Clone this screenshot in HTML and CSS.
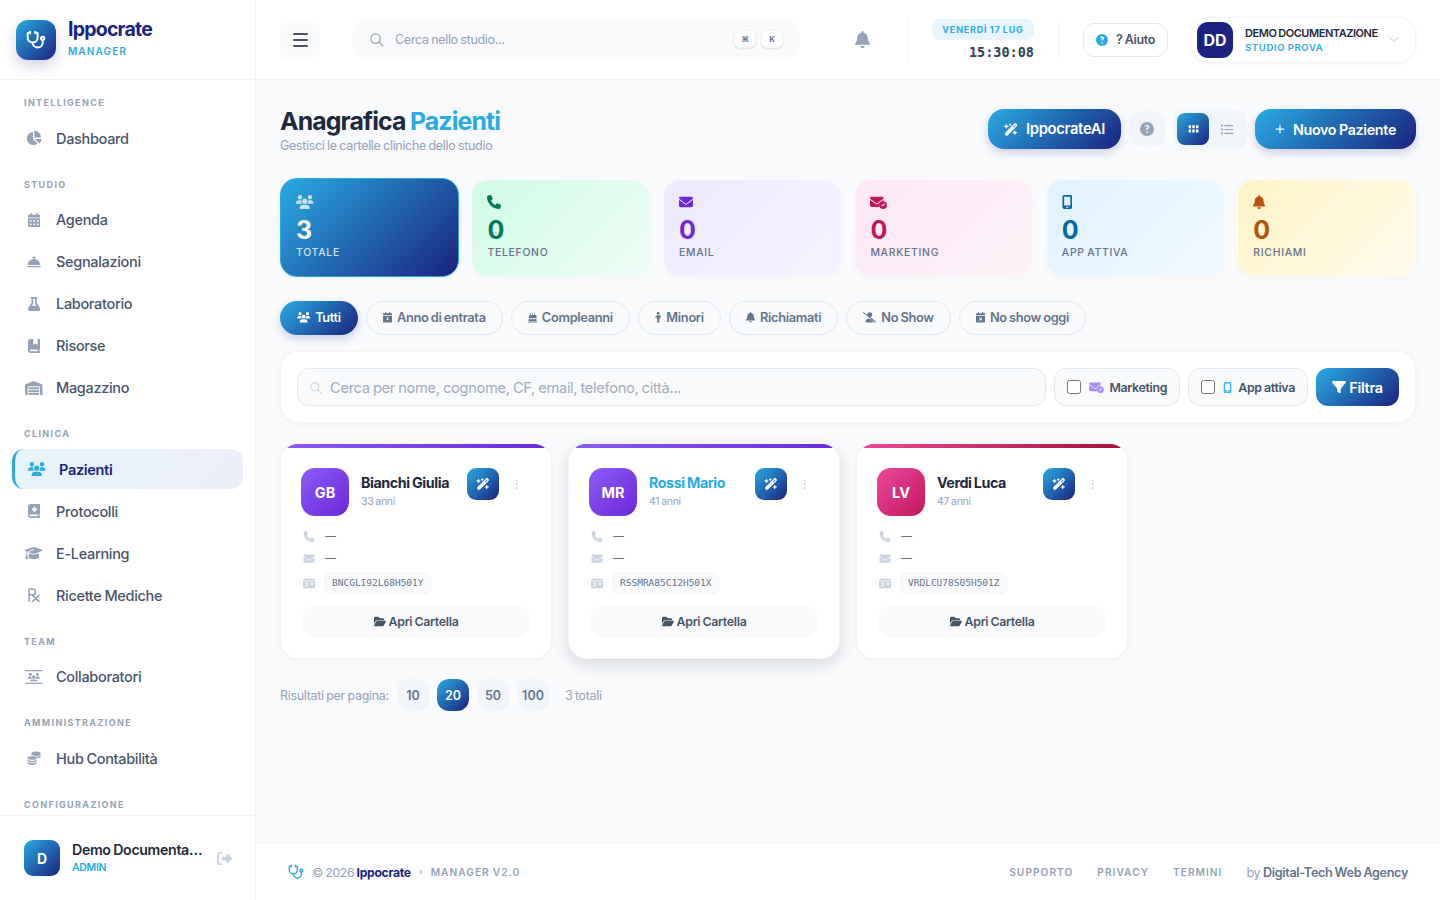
FILE: index.html
```html
<!DOCTYPE html>
<html lang="it">
<head>
    <meta charset="UTF-8">
    <meta name="viewport" content="width=device-width, initial-scale=1.0">
    <title>Anagrafica Pazienti - Ippocrate Manager</title>
    <link rel="stylesheet" href="styles.css">
</head>
<body>
    <!-- icon set, reused with <use> -->
    <svg class="sprite" aria-hidden="true">
        <defs>
            <g id="i-pie"><path d="M304 240V16.6c0-9 7-16.6 16-16.6C443.7 0 544 100.3 544 224c0 9-7.6 16-16.6 16H304zM32 272C32 150.7 122.1 50.3 239 34.3c9.2-1.3 17 6.1 17 15.4V288L412.5 444.5c6.7 6.7 6.2 17.7-1.5 23.1C371.8 495.6 323.8 512 272 512C139.5 512 32 404.6 32 272zm526.4 16c9.3 0 16.6 7.8 15.4 17c-7.7 55.9-34.6 105.6-73.9 142.3c-6 5.6-15.4 5.2-21.2-.7L320 288H558.4z"/></g>
            <g id="i-calendar"><path d="M128 0c17.7 0 32 14.3 32 32V64H288V32c0-17.7 14.3-32 32-32s32 14.3 32 32V64h48c26.5 0 48 21.5 48 48v48H0V112C0 85.5 21.5 64 48 64H96V32c0-17.7 14.3-32 32-32zM0 192H448V464c0 26.5-21.5 48-48 48H48c-26.5 0-48-21.5-48-48V192zm64 80v32c0 8.8 7.2 16 16 16h32c8.8 0 16-7.2 16-16V272c0-8.8-7.2-16-16-16H80c-8.8 0-16 7.2-16 16zm128 0v32c0 8.8 7.2 16 16 16h32c8.8 0 16-7.2 16-16V272c0-8.8-7.2-16-16-16H208c-8.8 0-16 7.2-16 16zm144-16c-8.8 0-16 7.2-16 16v32c0 8.8 7.2 16 16 16h32c8.8 0 16-7.2 16-16V272c0-8.8-7.2-16-16-16H336zM64 400v32c0 8.8 7.2 16 16 16h32c8.8 0 16-7.2 16-16V400c0-8.8-7.2-16-16-16H80c-8.8 0-16 7.2-16 16zm144-16c-8.8 0-16 7.2-16 16v32c0 8.8 7.2 16 16 16h32c8.8 0 16-7.2 16-16V400c0-8.8-7.2-16-16-16H208zm112 16v32c0 8.8 7.2 16 16 16h32c8.8 0 16-7.2 16-16V400c0-8.8-7.2-16-16-16H336c-8.8 0-16 7.2-16 16z"/></g>
            <g id="i-concierge"><path d="M216 64c-13.3 0-24 10.7-24 24s10.7 24 24 24h16v33.3C119.6 157.2 32 252.4 32 368H480c0-115.6-87.6-210.8-200-222.7V112h16c13.3 0 24-10.7 24-24s-10.7-24-24-24H256 216zM24 400c-13.3 0-24 10.7-24 24s10.7 24 24 24H488c13.3 0 24-10.7 24-24s-10.7-24-24-24H24z"/></g>
            <g id="i-flask"><path d="M288 0H160 128C110.3 0 96 14.3 96 32s14.3 32 32 32V196.8c0 11.8-3.3 23.5-9.5 33.5L10.3 406.2C3.6 417.2 0 429.7 0 442.6C0 480.9 31.1 512 69.4 512H378.6c38.3 0 69.4-31.1 69.4-69.4c0-12.8-3.6-25.4-10.3-36.4L329.5 230.4c-6.2-10.1-9.5-21.7-9.5-33.5V64c17.7 0 32-14.3 32-32s-14.3-32-32-32H288zM192 196.8V64h64V196.8c0 23.7 6.6 46.9 19 67.1L309.5 320H138.5L173 263.9c12.4-20.2 19-43.4 19-67.1z"/></g>
            <g id="i-bookmark"><path d="M0 96C0 43 43 0 96 0h96V190.7c0 13.4 15.5 20.9 26 12.5L272 160l54 43.2c10.5 8.4 26 .9 26-12.5V0h32 32c17.7 0 32 14.3 32 32V352c0 17.7-14.3 32-32 32v64c17.7 0 32 14.3 32 32s-14.3 32-32 32H384 96c-53 0-96-43-96-96V96zM64 416c0 17.7 14.3 32 32 32H352V384H96c-17.7 0-32 14.3-32 32z"/></g>
            <g id="i-warehouse"><path d="M0 488V171.3c0-26.2 15.9-49.7 40.2-59.4L308.1 4.8c7.6-3.1 16.1-3.1 23.8 0L599.8 111.9c24.3 9.7 40.2 33.3 40.2 59.4V488c0 13.3-10.7 24-24 24H568c-13.3 0-24-10.7-24-24V224c0-17.7-14.3-32-32-32H128c-17.7 0-32 14.3-32 32V488c0 13.3-10.7 24-24 24H24c-13.3 0-24-10.7-24-24zm488 24H152c-13.3 0-24-10.7-24-24V432H512v56c0 13.3-10.7 24-24 24zM128 400V336H512v64H128zm0-96V224H512v80H128z"/></g>
            <g id="i-users"><path d="M144 0a80 80 0 1 1 0 160A80 80 0 1 1 144 0zM512 0a80 80 0 1 1 0 160A80 80 0 1 1 512 0zM0 298.7C0 239.8 47.8 192 106.7 192h42.7c15.9 0 31 3.5 44.6 9.7c-1.3 7.2-1.9 14.7-1.9 22.3c0 38.2 16.8 72.5 43.3 96c-.2 0-.4 0-.7 0H21.3C9.6 320 0 310.4 0 298.7zM405.3 320c-.2 0-.4 0-.7 0c26.6-23.5 43.3-57.8 43.3-96c0-7.6-.7-15-1.9-22.3c13.6-6.3 28.7-9.7 44.6-9.7h42.7C592.2 192 640 239.8 640 298.7c0 11.8-9.6 21.3-21.3 21.3H405.3zM224 224a96 96 0 1 1 192 0 96 96 0 1 1 -192 0zM128 485.3C128 411.7 187.7 352 261.3 352H378.7C452.3 352 512 411.7 512 485.3c0 14.7-11.9 26.7-26.7 26.7H154.7c-14.7 0-26.7-11.9-26.7-26.7z"/></g>
            <g id="i-bookmed"><path d="M0 96C0 43 43 0 96 0H384h32c17.7 0 32 14.3 32 32V352c0 17.7-14.3 32-32 32v64c17.7 0 32 14.3 32 32s-14.3 32-32 32H384 96c-53 0-96-43-96-96V96zM64 416c0 17.7 14.3 32 32 32H352V384H96c-17.7 0-32 14.3-32 32zM208 112v48H160c-8.8 0-16 7.2-16 16v32c0 8.8 7.2 16 16 16h48v48c0 8.8 7.2 16 16 16h32c8.8 0 16-7.2 16-16V224h48c8.8 0 16-7.2 16-16V176c0-8.8-7.2-16-16-16H272V112c0-8.8-7.2-16-16-16H224c-8.8 0-16 7.2-16 16z"/></g>
            <g id="i-cap"><path d="M320 32c-8.1 0-16.1 1.4-23.7 4.1L15.8 137.4C6.3 140.9 0 149.9 0 160s6.3 19.1 15.8 22.6l57.9 20.9C57.3 229.3 48 259.8 48 291.9v28.1c0 28.4-10.8 57.7-22.3 80.8c-6.5 13-13.9 25.8-22.5 37.6C0 442.7-.9 448.3 .9 453.4s6 8.9 11.2 10.2l64 16c4.2 1.1 8.7 .3 12.4-2s6.3-6.1 7.1-10.4c8.6-42.8 4.3-81.2-2.1-108.7C90.3 344.3 86 329.8 80 316.5V291.9c0-30.2 10.2-58.7 27.9-81.5c12.9-15.5 29.6-28 49.2-35.7l157-61.7c8.2-3.2 17.5 .8 20.7 9s-.8 17.5-9 20.7l-157 61.7c-12.4 4.9-23.3 12.4-32.2 21.6l159.6 57.6c7.6 2.7 15.6 4.1 23.7 4.1s16.1-1.4 23.7-4.1L624.2 182.6c9.5-3.4 15.8-12.5 15.8-22.6s-6.3-19.1-15.8-22.6L343.7 36.1C336.1 33.4 328.1 32 320 32zM128 408c0 35.3 86 72 192 72s192-36.7 192-72L496.7 262.6 354.5 314c-11.1 4-22.8 6-34.5 6s-23.5-2-34.5-6L143.3 262.6 128 408z"/></g>
            <g id="i-rx"><path d="M40 480V40h130a105 105 0 0 1 0 210H40M150 250L400 490M400 270L170 490" fill="none" stroke="currentColor" stroke-width="56" stroke-linecap="round" stroke-linejoin="round"/></g>
            <g id="i-team"><path d="M20 24h600M20 488h600" stroke="currentColor" stroke-width="46" stroke-linecap="round"/><g transform="translate(96 100) scale(.7)"><path d="M144 0a80 80 0 1 1 0 160A80 80 0 1 1 144 0zM512 0a80 80 0 1 1 0 160A80 80 0 1 1 512 0zM0 298.7C0 239.8 47.8 192 106.7 192h42.7c15.9 0 31 3.5 44.6 9.7c-1.3 7.2-1.9 14.7-1.9 22.3c0 38.2 16.8 72.5 43.3 96H21.3C9.6 320 0 310.4 0 298.7zM405.3 320c26.6-23.5 43.3-57.8 43.3-96c0-7.6-.7-15-1.9-22.3c13.6-6.3 28.7-9.7 44.6-9.7h42.7C592.2 192 640 239.8 640 298.7c0 11.8-9.6 21.3-21.3 21.3H405.3zM224 224a96 96 0 1 1 192 0 96 96 0 1 1 -192 0zM128 440C128 390 187.7 352 261.3 352H378.7C452.3 352 512 390 512 440z"/></g></g>
            <g id="i-coins"><ellipse cx="330" cy="100" rx="170" ry="80"/><path d="M160 150v40c0 44 76 80 170 80s170-36 170-80v-40c-30 40-95 62-170 62s-140-22-170-62z"/><ellipse cx="190" cy="255" rx="175" ry="78" stroke="#fff" stroke-width="24"/><path d="M15 300v42c0 44 78 80 175 80s175-36 175-80v-42c-30 40-100 62-175 62S45 340 15 300z"/><path d="M15 390v42c0 44 78 80 175 80s175-36 175-80v-42c-30 40-100 62-175 62S45 430 15 390z"/></g>
            <g id="i-logout"><path d="M377.9 105.9L500.7 228.7c7.2 7.2 11.3 17.1 11.3 27.3s-4.1 20.1-11.3 27.3L377.9 406.1c-6.4 6.4-15 9.9-24 9.9c-18.7 0-33.9-15.2-33.9-33.9l0-62.1-128 0c-17.7 0-32-14.3-32-32l0-64c0-17.7 14.3-32 32-32l128 0 0-62.1c0-18.7 15.2-33.9 33.9-33.9c9 0 17.6 3.6 24 9.9zM160 96L96 96c-17.7 0-32 14.3-32 32l0 256c0 17.7 14.3 32 32 32l64 0c17.7 0 32 14.3 32 32s-14.3 32-32 32l-64 0c-53 0-96-43-96-96L0 128C0 75 43 32 96 32l64 0c17.7 0 32 14.3 32 32s-14.3 32-32 32z"/></g>
            <g id="i-bell"><path d="M224 0c-17.7 0-32 14.3-32 32V51.2C119 66 64 130.6 64 208v18.8c0 47-17.3 92.4-48.5 127.6l-7.4 8.3c-8.4 9.4-10.4 22.9-5.3 34.4S19.4 416 32 416H416c12.6 0 24-7.4 29.2-18.9s3.1-25-5.3-34.4l-7.4-8.3C401.3 319.2 384 273.9 384 226.8V208c0-77.4-55-142-128-156.8V32c0-17.7-14.3-32-32-32zm45.3 493.3c12-12 18.7-28.3 18.7-45.3H224 160c0 17 6.7 33.3 18.7 45.3s28.3 18.7 45.3 18.7s33.3-6.7 45.3-18.7z"/></g>
            <g id="i-wand"><path d="M234.7 42.7L197 56.8c-3 1.1-5 4-5 7.2s2 6.1 5 7.2l37.7 14.1L248.8 123c1.1 3 4 5 7.2 5s6.1-2 7.2-5l14.1-37.7L315 71.2c3-1.1 5-4 5-7.2s-2-6.1-5-7.2L277.3 42.7 263.2 5c-1.1-3-4-5-7.2-5s-6.1 2-7.2 5L234.7 42.7zM46.1 395.4c-18.7 18.7-18.7 49.1 0 67.9l34.6 34.6c18.7 18.7 49.1 18.7 67.9 0L529.9 116.5c18.7-18.7 18.7-49.1 0-67.9L495.3 14.1c-18.7-18.7-49.1-18.7-67.9 0L46.1 395.4zM484.6 82.6l-105 105-23.3-23.3 105-105 23.3 23.3zM7.5 117.2C3 118.9 0 123.2 0 128s3 9.1 7.5 10.8L64 160l21.2 56.5c1.7 4.5 6 7.5 10.8 7.5s9.1-3 10.8-7.5L128 160l56.5-21.2c4.5-1.7 7.5-6 7.5-10.8s-3-9.1-7.5-10.8L128 96 106.8 39.5C105.1 35 100.8 32 96 32s-9.1 3-10.8 7.5L64 96 7.5 117.2zm352 256c-4.5 1.7-7.5 6-7.5 10.8s3 9.1 7.5 10.8L416 416l21.2 56.5c1.7 4.5 6 7.5 10.8 7.5s9.1-3 10.8-7.5L480 416l56.5-21.2c4.5-1.7 7.5-6 7.5-10.8s-3-9.1-7.5-10.8L480 352l-21.2-56.5c-1.7-4.5-6-7.5-10.8-7.5s-9.1 3-10.8 7.5L416 352l-56.5 21.2z"/></g>
            <g id="i-phone"><path d="M164.9 24.6c-7.7-18.6-28-28.5-47.4-23.2l-88 24C12.1 30.2 0 46 0 64C0 311.4 200.6 512 448 512c18 0 33.8-12.1 38.6-29.5l24-88c5.3-19.4-4.6-39.7-23.2-47.4l-96-40c-16.3-6.8-35.2-2.1-46.3 11.6L304.7 368C234.3 334.7 177.3 277.7 144 207.3L193.3 167c13.7-11.2 18.4-30 11.6-46.3l-40-96z"/></g>
            <g id="i-mail"><path d="M48 64C21.5 64 0 85.5 0 112c0 15.1 7.1 29.3 19.2 38.4L236.8 313.6c11.4 8.5 27 8.5 38.4 0L492.8 150.4c12.1-9.1 19.2-23.3 19.2-38.4c0-26.5-21.5-48-48-48H48zM0 176V384c0 35.3 28.7 64 64 64H448c35.3 0 64-28.7 64-64V176L294.4 339.2c-22.8 17.1-54 17.1-76.8 0L0 176z"/></g>
            <g id="i-mailcheck"><path d="M48 64C21.5 64 0 85.5 0 112c0 15.1 7.1 29.3 19.2 38.4L236.8 313.6c11.4 8.5 27 8.5 38.4 0L492.8 150.4c12.1-9.1 19.2-23.3 19.2-38.4c0-26.5-21.5-48-48-48H48zM0 176V384c0 35.3 28.7 64 64 64H350a160 160 0 0 1 162-170V176L294.4 339.2c-22.8 17.1-54 17.1-76.8 0L0 176z"/><path fill-rule="evenodd" d="M496 240a144 144 0 1 1 0 288 144 144 0 0 1 0-288zM428 385l48 48 92-92-28-28-64 64-20-20z"/></g>
            <g id="i-mobile"><path d="M16 64C16 28.7 44.7 0 80 0H304c35.3 0 64 28.7 64 64V448c0 35.3-28.7 64-64 64H80c-35.3 0-64-28.7-64-64V64zM144 448c0 8.8 7.2 16 16 16h64c8.8 0 16-7.2 16-16s-7.2-16-16-16H160c-8.8 0-16 7.2-16 16zM304 64H80V384H304V64z"/></g>
            <g id="i-calplus"><path fill-rule="evenodd" d="M128 0c17.7 0 32 14.3 32 32V64H288V32c0-17.7 14.3-32 32-32s32 14.3 32 32V64h48c26.5 0 48 21.5 48 48v48H0V112C0 85.5 21.5 64 48 64H96V32c0-17.7 14.3-32 32-32zM0 192H448V464c0 26.5-21.5 48-48 48H48c-26.5 0-48-21.5-48-48V192zM200 240v90h-52l76 84 76-84h-52v-90z"/></g>
            <g id="i-calx"><path fill-rule="evenodd" d="M128 0c17.7 0 32 14.3 32 32V64H288V32c0-17.7 14.3-32 32-32s32 14.3 32 32V64h48c26.5 0 48 21.5 48 48v48H0V112C0 85.5 21.5 64 48 64H96V32c0-17.7 14.3-32 32-32zM0 192H448V464c0 26.5-21.5 48-48 48H48c-26.5 0-48-21.5-48-48V192zM170 260l-28 28 54 54-54 54 28 28 54-54 54 54 28-28-54-54 54-54-28-28-54 54z"/></g>
            <g id="i-cake"><path d="M112 40h32v90h-32zM208 40h32v90h-32zM304 40h32v90h-32zM80 150h288a48 48 0 0 1 48 48v90c-30 30-56 30-82 4-26 26-56 26-80 0-26 26-56 26-80 0-26 26-52 26-80 0l-2 0c-16 16-30 20-44 12V198a48 48 0 0 1 32-48zM32 340c30 20 50 10 68-4 26 26 62 26 84 4 26 24 58 24 80 0 24 24 60 26 84 0 22 20 46 20 68 4v112H32zM0 480h448v32H0z"/></g>
            <g id="i-child"><circle cx="160" cy="64" r="64"/><path d="M96 160h128l40 20 50 76-36 24-38-56v88h-20v200h-52V340h-16v172H100V312H80v-88l-38 56-36-24 50-76z"/></g>
            <g id="i-userslash"><circle cx="330" cy="130" r="120"/><path d="M170 512h320c30 0 30-10 30-30l-200-158h-60c-70 0-130 60-130 130 0 30 10 58 40 58zM400 310c70 20 130 80 130 160l-130-100z"/><path d="M30 30l580 452" fill="none" stroke="currentColor" stroke-width="52" stroke-linecap="round"/></g>
            <g id="i-filter"><path d="M3.9 54.9C10.5 40.9 24.5 32 40 32H472c15.5 0 29.5 8.9 36.1 22.9s4.6 30.5-5.2 42.5L320 320.9V448c0 12.1-6.8 23.2-17.7 28.6s-23.8 4.3-33.5-3l-64-48c-8.1-6-12.8-15.5-12.8-25.6V320.9L9 97.3C-.7 85.4-2.8 68.8 3.9 54.9z"/></g>
            <g id="i-folder"><path d="M88.7 223.8L0 375.8V96C0 60.7 28.7 32 64 32H181.5c17 0 33.3 6.7 45.3 18.7l26.5 26.5c12 12 28.3 18.7 45.3 18.7H416c35.3 0 64 28.7 64 64v32H144c-22.8 0-43.8 12.1-55.3 31.8zm27.6 16.1C122.1 230 132.6 224 144 224H544c11.5 0 22 6.1 27.7 16.1s5.7 22.2-.1 32.1l-112 192C453.9 474 443.4 480 432 480H32c-11.5 0-22-6.1-27.7-16.1s-5.7-22.2 .1-32.1l112-192z"/></g>
            <g id="i-idcard"><path fill-rule="evenodd" d="M64 32C29 32 0 61 0 96v320c0 35 29 64 64 64h448c35 0 64-29 64-64V96c0-35-29-64-64-64zM0 112h576v40H0zM176 200a48 48 0 1 1 0 96 48 48 0 0 1 0-96zM96 384c0-36 30-64 64-64h32c36 0 64 30 64 64zM352 216h144v36H352zM352 296h144v36H352z"/></g>
            <g id="i-question"><path fill-rule="evenodd" d="M256 0a256 256 0 1 1 0 512A256 256 0 0 1 256 0zM169 165c10-35 44-59 87-59 50 0 88 30 88 74 0 32-20 50-46 66-18 11-22 18-22 34h-60c0-36 14-54 44-72 18-11 24-18 24-28 0-14-12-24-30-24-18 0-30 10-36 28zM256 340a34 34 0 1 1 0 68 34 34 0 0 1 0-68z"/></g>
        </defs>
    </svg>

    <aside class="sidebar">
        <div class="brand">
            <div class="brand-logo">
                <svg class="steth" viewBox="0 0 24 24"><path d="M11 2v2M5 2v2M5 3H4a2 2 0 0 0-2 2v4a6 6 0 0 0 12 0V5a2 2 0 0 0-2-2h-1M8 15a6 6 0 0 0 12 0v-3"/><circle cx="20" cy="10" r="2"/></svg>
            </div>
            <div>
                <div class="brand-name">Ippocrate</div>
                <div class="brand-sub">MANAGER</div>
            </div>
        </div>

        <nav class="nav">
            <div class="nav-section">
                <div class="nav-label">INTELLIGENCE</div>
                <a class="nav-item"><span class="nav-ico"><svg class="ico" viewBox="0 0 576 512"><use href="#i-pie"/></svg></span>Dashboard</a>
            </div>
            <div class="nav-section">
                <div class="nav-label">STUDIO</div>
                <a class="nav-item"><span class="nav-ico"><svg class="ico" viewBox="0 0 448 512"><use href="#i-calendar"/></svg></span>Agenda</a>
                <a class="nav-item"><span class="nav-ico"><svg class="ico" viewBox="0 0 512 512"><use href="#i-concierge"/></svg></span>Segnalazioni</a>
                <a class="nav-item"><span class="nav-ico"><svg class="ico" viewBox="0 0 448 512"><use href="#i-flask"/></svg></span>Laboratorio</a>
                <a class="nav-item"><span class="nav-ico"><svg class="ico" viewBox="0 0 448 512"><use href="#i-bookmark"/></svg></span>Risorse</a>
                <a class="nav-item"><span class="nav-ico"><svg class="ico" viewBox="0 0 640 512"><use href="#i-warehouse"/></svg></span>Magazzino</a>
            </div>
            <div class="nav-section">
                <div class="nav-label">CLINICA</div>
                <a class="nav-item active"><span class="nav-ico"><svg class="ico" viewBox="0 0 640 512"><use href="#i-users"/></svg></span>Pazienti</a>
                <a class="nav-item"><span class="nav-ico"><svg class="ico" viewBox="0 0 448 512"><use href="#i-bookmed"/></svg></span>Protocolli</a>
                <a class="nav-item"><span class="nav-ico"><svg class="ico" viewBox="0 0 640 512"><use href="#i-cap"/></svg></span>E-Learning</a>
                <a class="nav-item"><span class="nav-ico"><svg class="ico" viewBox="0 0 448 512"><use href="#i-rx"/></svg></span>Ricette Mediche</a>
            </div>
            <div class="nav-section">
                <div class="nav-label">TEAM</div>
                <a class="nav-item"><span class="nav-ico"><svg class="ico" viewBox="0 0 640 512"><use href="#i-team"/></svg></span>Collaboratori</a>
            </div>
            <div class="nav-section">
                <div class="nav-label">AMMINISTRAZIONE</div>
                <a class="nav-item"><span class="nav-ico"><svg class="ico" viewBox="0 0 512 512"><use href="#i-coins"/></svg></span>Hub Contabilità</a>
            </div>
            <div class="nav-section">
                <div class="nav-label">CONFIGURAZIONE</div>
            </div>
        </nav>

        <div class="side-user">
            <div class="side-avatar">D</div>
            <div class="side-user-text">
                <div class="side-user-name">Demo Documenta…</div>
                <div class="side-user-role">ADMIN</div>
            </div>
            <svg class="side-logout" viewBox="0 0 512 512"><use href="#i-logout"/></svg>
        </div>
    </aside>

    <div class="main">
        <header class="topbar">
            <button class="menu-btn"><span></span><span></span><span></span></button>
            <div class="top-search">
                <svg class="search-ico" viewBox="0 0 24 24"><circle cx="10.5" cy="10.5" r="7.5"/><path d="M16 16l6 6"/></svg>
                <input type="text" placeholder="Cerca nello studio...">
                <span class="kbd">⌘</span>
                <span class="kbd">K</span>
            </div>
            <svg class="top-bell" viewBox="0 0 448 512"><use href="#i-bell"/></svg>
            <div class="top-divider first"></div>
            <div class="clock">
                <div class="clock-date">VENERDÌ 17 LUG</div>
                <div class="clock-time">15:30:08</div>
            </div>
            <div class="top-divider"></div>
            <button class="help-btn"><svg viewBox="0 0 512 512"><use href="#i-question"/></svg>? Aiuto</button>
            <div class="studio-pill">
                <div class="studio-avatar">DD</div>
                <div class="studio-text">
                    <div class="studio-name">DEMO DOCUMENTAZIONE</div>
                    <div class="studio-sub">STUDIO PROVA</div>
                </div>
                <svg class="chevron" viewBox="0 0 12 8"><path d="M1 1.5l5 5 5-5"/></svg>
            </div>
        </header>

        <main class="content">
            <div class="page-head">
                <div>
                    <h1>Anagrafica <span>Pazienti</span></h1>
                    <p>Gestisci le cartelle cliniche dello studio</p>
                </div>
                <div class="page-actions">
                    <button class="btn-grad btn-ai"><svg viewBox="0 0 576 512"><use href="#i-wand"/></svg>IppocrateAI</button>
                    <button class="btn-help"><svg viewBox="0 0 512 512"><use href="#i-question"/></svg></button>
                    <div class="view-toggle">
                        <button class="view-btn on"><svg class="dots" viewBox="0 0 18 12"><path d="M1 0h4v4.800H1zM7 0h4v4.800H7zM13 0h4v4.800h-4zM1 7h4v4.800H1zM7 7h4v4.800H7zM13 7h4v4.800h-4z"/></svg></button>
                        <button class="view-btn"><svg class="lines" viewBox="0 0 14 12"><circle cx="1.200" cy="1.500" r="1.200"/><circle cx="1.200" cy="6" r="1.200"/><circle cx="1.200" cy="10.500" r="1.200"/><path d="M4 .8h10v1.400H4zM4 5.300h10v1.400H4zM4 9.800h10v1.400H4z"/></svg></button>
                    </div>
                    <button class="btn-grad btn-new"><svg class="plus" viewBox="0 0 12 12"><path d="M6 1v10M1 6h10"/></svg>Nuovo Paziente</button>
                </div>
            </div>

            <section class="stats">
                <div class="stat stat-total"><svg viewBox="0 0 640 512"><use href="#i-users"/></svg><b>3</b><span>TOTALE</span></div>
                <div class="stat stat-green"><svg viewBox="0 0 512 512"><use href="#i-phone"/></svg><b>0</b><span>TELEFONO</span></div>
                <div class="stat stat-purple"><svg viewBox="0 0 512 512"><use href="#i-mail"/></svg><b>0</b><span>EMAIL</span></div>
                <div class="stat stat-pink"><svg viewBox="0 0 640 528"><use href="#i-mailcheck"/></svg><b>0</b><span>MARKETING</span></div>
                <div class="stat stat-blue"><svg viewBox="0 0 384 512"><use href="#i-mobile"/></svg><b>0</b><span>APP ATTIVA</span></div>
                <div class="stat stat-amber"><svg viewBox="0 0 448 512"><use href="#i-bell"/></svg><b>0</b><span>RICHIAMI</span></div>
            </section>

            <div class="chips">
                <button class="chip on"><svg viewBox="0 0 640 512"><use href="#i-users"/></svg>Tutti</button>
                <button class="chip"><svg viewBox="0 0 448 512"><use href="#i-calplus"/></svg>Anno di entrata</button>
                <button class="chip"><svg viewBox="0 0 448 512"><use href="#i-cake"/></svg>Compleanni</button>
                <button class="chip"><svg viewBox="0 0 320 512"><use href="#i-child"/></svg>Minori</button>
                <button class="chip"><svg viewBox="0 0 448 512"><use href="#i-bell"/></svg>Richiamati</button>
                <button class="chip"><svg viewBox="0 0 640 512"><use href="#i-userslash"/></svg>No Show</button>
                <button class="chip"><svg viewBox="0 0 448 512"><use href="#i-calx"/></svg>No show oggi</button>
            </div>

            <div class="filter-bar">
                <div class="filter-search">
                    <svg class="search-ico" viewBox="0 0 24 24"><circle cx="10.500" cy="10.500" r="7.500"/><path d="M16 16l6 6"/></svg>
                    <input type="text" placeholder="Cerca per nome, cognome, CF, email, telefono, città...">
                </div>
                <label class="check"><input type="checkbox"><svg class="check-mk" viewBox="0 0 640 528"><use href="#i-mailcheck"/></svg>Marketing</label>
                <label class="check"><input type="checkbox"><svg class="check-app" viewBox="0 0 384 512"><use href="#i-mobile"/></svg>App attiva</label>
                <button class="btn-filter"><svg viewBox="0 0 512 512"><use href="#i-filter"/></svg>Filtra</button>
            </div>

            <div class="cards">
                <article class="pcard">
                    <div class="pcard-top">
                        <div class="pavatar">GB</div>
                        <div class="pname-wrap"><div class="pname">Bianchi Giulia</div><div class="page-age">33 anni</div></div>
                        <button class="wand"><svg viewBox="0 0 576 512"><use href="#i-wand"/></svg></button>
                        <span class="kebab"><i></i><i></i><i></i></span>
                    </div>
                    <div class="prow"><svg viewBox="0 0 512 512"><use href="#i-phone"/></svg><span>—</span></div>
                    <div class="prow"><svg viewBox="0 0 512 512"><use href="#i-mail"/></svg><span>—</span></div>
                    <div class="prow cf"><svg viewBox="0 0 576 512"><use href="#i-idcard"/></svg><code>BNCGLI92L68H501Y</code></div>
                    <button class="open-btn"><svg viewBox="0 0 576 512"><use href="#i-folder"/></svg>Apri Cartella</button>
                </article>
                <article class="pcard hover">
                    <div class="pcard-top">
                        <div class="pavatar">MR</div>
                        <div class="pname-wrap"><div class="pname">Rossi Mario</div><div class="page-age">41 anni</div></div>
                        <button class="wand"><svg viewBox="0 0 576 512"><use href="#i-wand"/></svg></button>
                        <span class="kebab"><i></i><i></i><i></i></span>
                    </div>
                    <div class="prow"><svg viewBox="0 0 512 512"><use href="#i-phone"/></svg><span>—</span></div>
                    <div class="prow"><svg viewBox="0 0 512 512"><use href="#i-mail"/></svg><span>—</span></div>
                    <div class="prow cf"><svg viewBox="0 0 576 512"><use href="#i-idcard"/></svg><code>RSSMRA85C12H501X</code></div>
                    <button class="open-btn"><svg viewBox="0 0 576 512"><use href="#i-folder"/></svg>Apri Cartella</button>
                </article>
                <article class="pcard pink">
                    <div class="pcard-top">
                        <div class="pavatar">LV</div>
                        <div class="pname-wrap"><div class="pname">Verdi Luca</div><div class="page-age">47 anni</div></div>
                        <button class="wand"><svg viewBox="0 0 576 512"><use href="#i-wand"/></svg></button>
                        <span class="kebab"><i></i><i></i><i></i></span>
                    </div>
                    <div class="prow"><svg viewBox="0 0 512 512"><use href="#i-phone"/></svg><span>—</span></div>
                    <div class="prow"><svg viewBox="0 0 512 512"><use href="#i-mail"/></svg><span>—</span></div>
                    <div class="prow cf"><svg viewBox="0 0 576 512"><use href="#i-idcard"/></svg><code>VRDLCU78S05H501Z</code></div>
                    <button class="open-btn"><svg viewBox="0 0 576 512"><use href="#i-folder"/></svg>Apri Cartella</button>
                </article>
            </div>

            <div class="pager">
                <span class="pager-label">Risultati per pagina:</span>
                <button class="pg">10</button>
                <button class="pg on">20</button>
                <button class="pg">50</button>
                <button class="pg">100</button>
                <span class="pager-total">3 totali</span>
            </div>
        </main>

        <footer class="footer">
            <svg class="foot-steth" viewBox="0 0 24 24"><path d="M11 2v2M5 2v2M5 3H4a2 2 0 0 0-2 2v4a6 6 0 0 0 12 0V5a2 2 0 0 0-2-2h-1M8 15a6 6 0 0 0 12 0v-3"/><circle cx="20" cy="10" r="2"/></svg>
            <span class="foot-copy">© 2026 <b>Ippocrate</b></span>
            <i class="foot-dot"></i>
            <span class="foot-caps">MANAGER V2.0</span>
            <div class="foot-right">
                <a class="foot-caps">SUPPORTO</a>
                <a class="foot-caps">PRIVACY</a>
                <a class="foot-caps">TERMINI</a>
                <span class="foot-by">by <b>Digital-Tech Web Agency</b></span>
            </div>
        </footer>
    </div>
</body>
</html>
```

FILE: styles.css
```css
* {
    box-sizing: border-box;
}

body {
    margin: 0;
    height: 900px;
    display: flex;
    overflow: hidden;
    font-family: Inter, "Noto Sans", sans-serif;
    letter-spacing: -0.02em;
    word-spacing: -0.04em;
    background-color: #f8fafc;
    color: #1e293b;
}

button {
    font-family: inherit;
    letter-spacing: inherit;
    word-spacing: inherit;
    border: none;
    padding: 0;
    cursor: pointer;
}

input {
    font-family: inherit;
    letter-spacing: inherit;
    word-spacing: inherit;
}

.sprite {
    position: absolute;
    width: 0;
    height: 0;
}

svg {
    fill: currentColor;
    flex: none;
}

/* sidebar */
.sidebar {
    width: 256px;
    flex: none;
    display: flex;
    flex-direction: column;
    background-color: #fff;
    border-right: 1px solid #f1f5f9;
}

.brand {
    height: 80px;
    flex: none;
    display: flex;
    align-items: center;
    gap: 12px;
    padding-left: 16px;
    border-bottom: 1px solid #f1f5f9;
}

.brand-logo {
    width: 40px;
    height: 40px;
    border-radius: 12px;
    display: flex;
    align-items: center;
    justify-content: center;
    background: linear-gradient(135deg, #29abe2, #1a237e);
    box-shadow: 0 6px 14px rgba(26, 35, 126, 0.2);
}

.steth {
    width: 20px;
    height: 20px;
    fill: none;
    stroke: #fff;
    stroke-width: 2.4;
    stroke-linecap: round;
    stroke-linejoin: round;
}

.brand-name {
    margin-top: -3px;
    font-size: 19.5px;
    line-height: 24px;
    font-weight: 700;
    color: #1a237e;
    letter-spacing: -0.04em;
}

.brand-sub {
    font-size: 10px;
    line-height: 16px;
    margin-top: 2px;
    font-weight: 600;
    color: #29abe2;
    letter-spacing: 0.115em;
}

.nav {
    flex: 1;
    overflow: hidden;
    padding: 15px 12px 0;
}

.nav-section {
    margin-bottom: 18.6px;
}

.nav-label {
    height: 15px;
    line-height: 15px;
    margin: 0 0 8px 12px;
    font-size: 9px;
    font-weight: 700;
    letter-spacing: 0.15em;
    color: #94a3b8;
}

.nav-item {
    height: 40px;
    margin-bottom: 2px;
    display: flex;
    align-items: center;
    gap: 12px;
    padding-left: 12px;
    border-radius: 12px;
    font-size: 14.5px;
    font-weight: 500;
    color: #475569;
}

.nav-ico {
    width: 20px;
    display: flex;
    justify-content: center;
    color: #94a3b8;
}

.ico {
    height: 14px;
    width: auto;
}

.nav-item.active {
    border-left: 3px solid #29abe2;
    color: #1a237e;
    font-weight: 600;
    background: linear-gradient(135deg, #e6f4fb, #ebedf7);
}

.nav-item.active .nav-ico {
    color: #29abe2;
}

.side-user {
    height: 85px;
    flex: none;
    display: flex;
    align-items: center;
    gap: 12px;
    padding: 0 24px;
    border-top: 1px solid #f1f5f9;
}

.side-avatar {
    width: 36px;
    height: 36px;
    flex: none;
    border-radius: 9px;
    display: flex;
    align-items: center;
    justify-content: center;
    color: #fff;
    font-size: 14px;
    font-weight: 700;
    background: linear-gradient(135deg, #29abe2, #1a237e);
}

.side-user-text {
    width: 130px;
    flex: none;
}

.side-user-name {
    font-size: 14.2px;
    line-height: 18px;
    font-weight: 600;
    letter-spacing: -0.025em;
    color: #1e293b;
    white-space: nowrap;
}

.side-user-role {
    margin-top: 1px;
    font-size: 10.5px;
    line-height: 16px;
    font-weight: 600;
    color: #29abe2;
}

.side-logout {
    width: 15px;
    height: 15px;
    color: #cbd5e1;
    margin-left: 3px;
}

/* top bar */
.main {
    flex: 1;
    min-width: 0;
    display: flex;
    flex-direction: column;
}

.topbar {
    height: 80px;
    flex: none;
    display: flex;
    align-items: center;
    padding: 0 24px;
    background-color: #fff;
    border-bottom: 1px solid #f1f5f9;
}

.menu-btn {
    width: 40px;
    height: 40px;
    flex: none;
    border-radius: 12px;
    background-color: #f8fafc;
    display: flex;
    flex-direction: column;
    align-items: center;
    justify-content: center;
    gap: 4px;
}

.menu-btn span {
    width: 15px;
    height: 2px;
    border-radius: 1px;
    background-color: #475569;
}

.top-search {
    width: 448px;
    height: 41px;
    margin-left: 32px;
    margin-top: -1px;
    padding: 0 17px;
    flex: none;
    display: flex;
    align-items: center;
    gap: 5px;
    border-radius: 16px;
    background-color: #f8fafc;
}

.search-ico {
    width: 15px;
    height: 15px;
    fill: none;
    stroke: #94a3b8;
    stroke-width: 2;
    stroke-linecap: round;
}

.top-search input {
    flex: 1;
    min-width: 0;
    margin-left: 6px;
    border: none;
    outline: none;
    padding: 0;
    background: none;
    font-size: 12.5px;
}

.top-search input::placeholder {
    color: #94a3b8;
    opacity: 1;
}

.kbd {
    width: 22px;
    height: 18px;
    flex: none;
    display: flex;
    align-items: center;
    justify-content: center;
    border-radius: 6px;
    background-color: #fff;
    border: 1px solid #f1f5f9;
    box-shadow: 0 1px 2px rgba(15, 23, 42, 0.12);
    font-size: 8px;
    font-weight: 700;
    color: #64748b;
}

.top-bell {
    width: 15px;
    height: 17px;
    flex: none;
    margin-left: 55px;
    color: #94a3b8;
}

.top-divider {
    width: 1px;
    height: 40px;
    flex: none;
    background-color: #f1f5f9;
    margin-left: 24px;
}

.top-divider.first {
    margin-left: 37px;
}

.clock {
    width: 102px;
    margin-left: 24px;
    flex: none;
    text-align: right;
}

.clock-date {
    height: 21px;
    line-height: 21px;
    border-radius: 7px;
    text-align: center;
    background-color: #e8f5fc;
    color: #29abe2;
    font-size: 9px;
    font-weight: 700;
    letter-spacing: 0.09em;
}

.clock-time {
    margin-top: 3px;
    line-height: 18px;
    font-family: "DejaVu Sans Mono", monospace;
    font-size: 13.5px;
    font-weight: 700;
    letter-spacing: 0;
    color: #334155;
}

.help-btn {
    width: 85px;
    height: 34px;
    margin-left: 24px;
    flex: none;
    display: flex;
    align-items: center;
    justify-content: center;
    gap: 8px;
    border-radius: 12px;
    background-color: #fff;
    border: 1px solid #e2e8f0;
    font-size: 12.5px;
    font-weight: 600;
    color: #475569;
}

.help-btn svg {
    width: 12px;
    height: 12px;
    color: #29abe2;
}

.studio-pill {
    width: 225px;
    height: 46px;
    margin-left: 23px;
    flex: none;
    display: flex;
    align-items: center;
    padding: 0 16px 0 5px;
    border-radius: 18px;
    background-color: #fff;
    border: 1px solid #f1f5f9;
    box-shadow: 0 1px 4px rgba(15, 23, 42, 0.05);
}

.studio-avatar {
    width: 36px;
    height: 36px;
    flex: none;
    border-radius: 11px;
    display: flex;
    align-items: center;
    justify-content: center;
    background-color: #1a237e;
    color: #fff;
    font-size: 16px;
    font-weight: 700;
    letter-spacing: 0;
}

.studio-text {
    margin-left: 12px;
    flex: 1;
    min-width: 0;
}

.studio-name {
    font-size: 11px;
    line-height: 15px;
    font-weight: 600;
    letter-spacing: -0.04em;
    white-space: nowrap;
    color: #1e293b;
}

.studio-sub {
    font-size: 9.5px;
    line-height: 13px;
    font-weight: 600;
    letter-spacing: 0.07em;
    color: #29abe2;
}

.chevron {
    width: 10px;
    height: 7px;
    fill: none;
    stroke: #cbd5e1;
    stroke-width: 1.3;
}

/* page */
.content {
    flex: 1;
    min-height: 0;
    padding: 29px 24px 0;
}

.page-head {
    height: 40px;
    display: flex;
    justify-content: space-between;
    align-items: flex-start;
}

.page-head h1 {
    margin: -3px 0 0;
    font-size: 24.8px;
    line-height: 30px;
    font-weight: 700;
    letter-spacing: -0.035em;
    color: #1e293b;
}

.page-head h1 span {
    color: #29abe2;
}

.page-head p {
    margin: 2px 0 0;
    font-size: 12.5px;
    line-height: 16px;
    color: #94a3b8;
}

.page-actions {
    display: flex;
    align-items: center;
    gap: 8px;
}

.btn-grad {
    height: 40px;
    display: flex;
    align-items: center;
    justify-content: center;
    border-radius: 16px;
    color: #fff;
    font-size: 14.3px;
    font-weight: 600;
    background: linear-gradient(135deg, #29abe2, #1a237e);
    box-shadow: 0 4px 10px rgba(26, 35, 126, 0.2);
}

.btn-ai {
    width: 133px;
    gap: 8px;
    font-size: 14.8px;
}

.btn-ai svg {
    width: 14px;
    height: 13px;
}

.btn-new {
    width: 161px;
    gap: 8px;
}

.plus {
    width: 10px;
    height: 10px;
    fill: none;
    stroke: #fff;
    stroke-width: 1.5;
}

.btn-help {
    width: 36px;
    height: 36px;
    border-radius: 12px;
    background-color: #f1f5f9;
    display: flex;
    align-items: center;
    justify-content: center;
    color: #94a3b8;
}

.btn-help svg {
    width: 14px;
    height: 14px;
}

.view-toggle {
    width: 74px;
    height: 40px;
    padding: 4px;
    display: flex;
    gap: 2px;
    border-radius: 12px;
    background-color: #f1f5f9;
}

.view-btn {
    width: 32px;
    height: 32px;
    border-radius: 8px;
    background: none;
    display: flex;
    align-items: center;
    justify-content: center;
    color: #94a3b8;
}

.view-btn.on {
    color: #fff;
    background: linear-gradient(135deg, #29abe2, #1a237e);
}

.dots {
    width: 11px;
    height: 8px;
}

.lines {
    width: 12px;
    height: 11px;
}

/* stat cards */
.stats {
    display: grid;
    grid-template-columns: repeat(6, 1fr);
    gap: 12.8px;
    margin-top: 30px;
}

.stat {
    height: 98px;
    padding: 15px 15px 0;
    border-radius: 17px;
    border: 1px solid rgba(255, 255, 255, 0.7);
    box-shadow: 0 1px 4px rgba(15, 23, 42, 0.04);
    display: flex;
    flex-direction: column;
    align-items: flex-start;
}

.stat svg {
    height: 14px;
    width: auto;
}

.stat b {
    font-size: 25px;
    line-height: 28px;
    margin-top: 7px;
    font-weight: 700;
    letter-spacing: 0;
}

.stat span {
    margin-top: 1px;
    font-size: 10.4px;
    line-height: 16px;
    font-weight: 500;
    letter-spacing: 0.07em;
    word-spacing: -0.1em;
    color: #64748b;
}

.stat-total {
    height: 99px;
    margin-top: -1px;
    padding-top: 16px;
    background: linear-gradient(135deg, #29abe2, #1a237e);
    color: #fff;
    border-color: #29abe2;
}

.stat-total svg {
    opacity: 0.75;
}

.stat-total span {
    color: rgba(255, 255, 255, 0.8);
}

.stat-green {
    background: linear-gradient(135deg, #d1fae5, #ecfdf5);
    color: #047857;
}

.stat-purple {
    background: linear-gradient(135deg, #ede9fe, #f5f3ff);
    color: #6d28d9;
}

.stat-pink {
    background: linear-gradient(135deg, #fce7f3, #fdf2f8);
    color: #be185d;
}

.stat-blue {
    background: linear-gradient(135deg, #e0f2fe, #f0f9ff);
    color: #0369a1;
}

.stat-amber {
    background: linear-gradient(135deg, #fef3c7, #fffbeb);
    color: #b45309;
}

/* chips */
.chips {
    display: flex;
    gap: 8px;
    margin-top: 24px;
}

.chip {
    height: 34px;
    padding: 0 16px 1px;
    display: flex;
    align-items: center;
    gap: 5px;
    border-radius: 17px;
    background: none;
    border: 1px solid #e2e8f0;
    font-size: 12.8px;
    font-weight: 600;
    color: #64748b;
}

.chip svg {
    height: 10.5px;
    width: auto;
}

.chip.on {
    padding: 0 17px 1px;
    border: none;
    color: #fff;
    background: linear-gradient(135deg, #29abe2, #1a237e);
    box-shadow: 0 4px 10px rgba(26, 35, 126, 0.2);
}

/* filter bar */
.filter-bar {
    margin-top: 16px;
    height: 72px;
    padding: 0 16px;
    display: flex;
    align-items: center;
    gap: 8px;
    border-radius: 18px;
    background-color: #fff;
    border: 1px solid #f1f5f9;
    box-shadow: 0 1px 4px rgba(15, 23, 42, 0.04);
}

.filter-search {
    flex: 1;
    min-width: 0;
    height: 38px;
    display: flex;
    align-items: center;
    gap: 8px;
    padding-left: 11px;
    border-radius: 12px;
    background-color: #f8fafc;
    border: 1px solid #e2e8f0;
}

.filter-search .search-ico {
    width: 13px;
    height: 13px;
    stroke: #cbd5e1;
}

.filter-search input {
    flex: 1;
    min-width: 0;
    border: none;
    outline: none;
    padding: 1px 0 0;
    background: none;
    font-size: 14.7px;
}

.filter-search input::placeholder {
    color: #a0aec0;
    opacity: 1;
}

.check {
    height: 38px;
    flex: none;
    display: flex;
    align-items: center;
    padding: 0 12px;
    border-radius: 12px;
    background-color: #f8fafc;
    border: 1px solid #e2e8f0;
    font-size: 12.4px;
    font-weight: 600;
    color: #475569;
}

.check input {
    width: 14px;
    height: 14px;
    margin: 0 8px 0 0;
}

.check-mk {
    width: 15px;
    height: 12px;
    margin: 0 5px 0 0;
    color: #a78bfa;
}

.check-app {
    width: 9px;
    height: 11px;
    margin: 0 6px 0 0;
    color: #38bdf8;
}

.btn-filter {
    width: 83px;
    height: 38px;
    flex: none;
    display: flex;
    align-items: center;
    justify-content: center;
    gap: 3px;
    border-radius: 12px;
    color: #fff;
    font-size: 14.5px;
    font-weight: 600;
    background: linear-gradient(135deg, #29abe2, #1a237e);
}

.btn-filter svg {
    width: 14px;
    height: 14px;
}

/* patient cards */
.cards {
    margin-top: 20px;
    display: grid;
    grid-template-columns: repeat(4, 272px);
    gap: 16px;
}

.pcard {
    position: relative;
    height: 216px;
    overflow: hidden;
    padding: 24px 20px 0;
    border-radius: 18px;
    background-color: #fff;
    border: 1px solid #f1f5f9;
    box-shadow: 0 1px 4px rgba(15, 23, 42, 0.04);
}

.pcard::before {
    content: "";
    position: absolute;
    left: 0;
    right: 0;
    top: 0;
    height: 4px;
    background: linear-gradient(90deg, #8b5cf6, #6d28d9);
}

.pcard.hover {
    box-shadow: 0 6px 16px rgba(15, 23, 42, 0.14);
}

.pcard.pink::before {
    background: linear-gradient(90deg, #ec4899, #9f1239);
}

.pcard-top {
    display: flex;
    align-items: flex-start;
    height: 48px;
    margin-bottom: 9px;
}

.pavatar {
    width: 48px;
    height: 48px;
    flex: none;
    border-radius: 14px;
    display: flex;
    align-items: center;
    justify-content: center;
    color: #fff;
    font-size: 14.5px;
    font-weight: 700;
    letter-spacing: 0;
    background: linear-gradient(135deg, #8b5cf6, #6d28d9);
}

.pink .pavatar {
    background: linear-gradient(135deg, #ec4899, #be185d);
}

.pname-wrap {
    flex: 1;
    min-width: 0;
    margin-left: 12px;
}

.pname {
    margin-top: 5px;
    font-size: 14.3px;
    line-height: 20px;
    font-weight: 700;
    letter-spacing: -0.03em;
    color: #1e293b;
}

.hover .pname {
    color: #29abe2;
}

.page-age {
    margin-top: 2px;
    font-size: 10.5px;
    line-height: 14px;
    color: #94a3b8;
}

.wand {
    width: 32px;
    height: 32px;
    flex: none;
    border-radius: 9px;
    display: flex;
    align-items: center;
    justify-content: center;
    color: #fff;
    background: linear-gradient(135deg, #29abe2, #1a237e);
}

.wand svg {
    width: 14px;
    height: 12px;
}

.kebab {
    width: 36px;
    height: 32px;
    margin-right: -4px;
    flex: none;
    display: flex;
    flex-direction: column;
    align-items: center;
    justify-content: center;
    gap: 1.5px;
}

.kebab i {
    width: 2px;
    height: 2px;
    border-radius: 1px;
    background-color: #cbd5e1;
}

.prow {
    height: 22px;
    display: flex;
    align-items: center;
    gap: 10px;
    font-size: 11px;
    color: #64748b;
}

.prow svg {
    width: 12px;
    height: 11px;
    margin-left: 2px;
    color: #cbd5e1;
}

.prow.cf {
    margin-top: 3px;
}

.prow code {
    font-family: "DejaVu Sans Mono", monospace;
    font-size: 9.5px;
    line-height: 20px;
    letter-spacing: 0;
    padding: 0 6px;
    border-radius: 5px;
    background-color: #f8fafc;
    border: 1px solid #f1f5f9;
    color: #64748b;
}

.open-btn {
    width: 100%;
    height: 32px;
    margin-top: 12px;
    padding-bottom: 2px;
    display: flex;
    align-items: center;
    justify-content: center;
    gap: 3px;
    border-radius: 14px;
    background-color: #f8fafc;
    font-size: 12.4px;
    font-weight: 600;
    color: #475569;
}

.open-btn svg {
    width: 12px;
    height: 11px;
}

/* pager */
.pager {
    margin-top: 20px;
    display: flex;
    align-items: center;
    gap: 8px;
    font-size: 12.5px;
    color: #94a3b8;
}

.pager-label {
    width: 109px;
    white-space: nowrap;
}

.pg {
    width: 32px;
    height: 32px;
    border-radius: 12px;
    background-color: #f1f5f9;
    font-size: 12.5px;
    font-weight: 600;
    letter-spacing: 0;
    color: #64748b;
}

.pg.on {
    color: #fff;
    background: linear-gradient(135deg, #29abe2, #1a237e);
}

.pager-total {
    margin-left: 8px;
}

/* footer */
.footer {
    height: 57px;
    flex: none;
    display: flex;
    align-items: center;
    padding: 0 32px;
    background-color: #fff;
    border-top: 1px solid #f1f5f9;
}

.foot-steth {
    width: 16px;
    height: 16px;
    fill: none;
    stroke: #29abe2;
    stroke-width: 2.2;
    stroke-linecap: round;
    stroke-linejoin: round;
}

.foot-copy {
    margin-left: 8px;
    font-size: 12.2px;
    color: #94a3b8;
}

.foot-copy b {
    color: #1a237e;
    font-weight: 700;
}

.foot-dot {
    width: 4px;
    height: 4px;
    margin: 0 8px;
    border-radius: 2px;
    background-color: #cbd5e1;
}

.foot-caps {
    font-size: 10.2px;
    font-weight: 600;
    letter-spacing: 0.1em;
    color: #94a3b8;
}

.foot-right {
    margin-left: auto;
    display: flex;
    align-items: center;
    gap: 24px;
}

.foot-by {
    font-size: 12.6px;
    color: #94a3b8;
}

.foot-by b {
    font-weight: 600;
    color: #64748b;
}
```
